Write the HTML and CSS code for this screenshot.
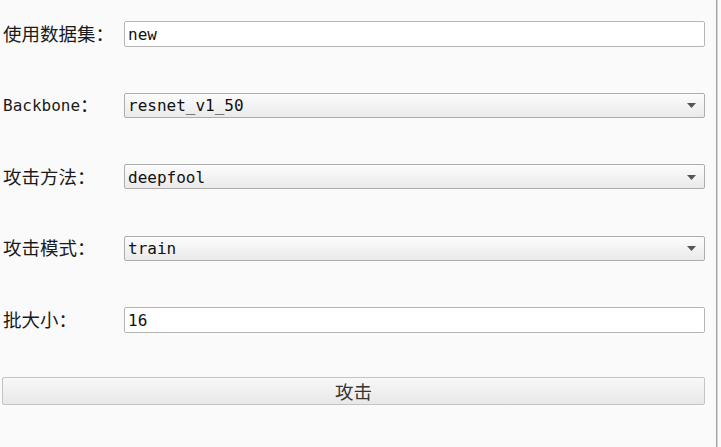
FILE: index.html
```html
<!DOCTYPE html>
<html lang="zh">
<head>
<meta charset="utf-8">
<title>攻击</title>
<link rel="stylesheet" href="styles.css">
</head>
<body>
<div class="window">
  <main class="form">
    <label class="label"><span class="cjk">使用数据集：</span></label>
    <input class="field" type="text" value="new">

    <label class="label">Backbone<span class="cjk">：</span></label>
    <div class="field combo"><span>resnet_v1_50</span><svg class="arrow" width="9" height="5" viewBox="0 0 9 5"><polygon points="0,0 9,0 4.5,5" fill="#555"/></svg></div>

    <label class="label"><span class="cjk">攻击方法：</span></label>
    <div class="field combo"><span>deepfool</span><svg class="arrow" width="9" height="5" viewBox="0 0 9 5"><polygon points="0,0 9,0 4.5,5" fill="#555"/></svg></div>

    <label class="label"><span class="cjk">攻击模式：</span></label>
    <div class="field combo"><span>train</span><svg class="arrow" width="9" height="5" viewBox="0 0 9 5"><polygon points="0,0 9,0 4.5,5" fill="#555"/></svg></div>

    <label class="label"><span class="cjk">批大小：</span></label>
    <input class="field" type="text" value="16">

    <button class="attack" type="button">攻击</button>
  </main>
  <div class="edge"></div>
</div>
</body>
</html>
```

FILE: styles.css
```css
html, body {
  margin: 0;
  padding: 0;
  background: #fafafa;
}

body {
  font-family: "DejaVu Sans Mono", "Noto Sans CJK SC", monospace;
  font-size: 16px;
  color: #111;
}

.window {
  display: flex;
  height: 447px;
}

.form {
  width: 716px;
  box-sizing: border-box;
  padding: 21px 11px 0 2px;
  display: grid;
  grid-template-columns: 122px 1fr;
  grid-auto-rows: 26px;
  row-gap: 45.4px;
  align-items: center;
  align-content: start;
}

.label {
  padding-left: 1px;
  white-space: nowrap;
  line-height: 28px;
  height: 26px;
  color: #1a1a1a;
}

.cjk {
  font-family: "Noto Sans CJK SC", sans-serif;
  font-size: 18.5px;
  line-height: 1;
  vertical-align: -1px;
  color: #1a1a1a;
}

.field {
  height: 26px;
  box-sizing: border-box;
  margin: 0;
  border: 1px solid #b6b6b6;
  border-radius: 2px;
  background: #fff;
  padding: 1px 3px 0;
  font-family: "DejaVu Sans Mono", monospace;
  font-size: 16px;
  color: #111;
  outline: none;
  width: 100%;
}

.combo {
  height: 25px;
  display: flex;
  align-items: center;
  justify-content: space-between;
  padding-right: 8px;
  background: linear-gradient(#fcfcfc, #eaeaea);
  border-color: #adadad;
}

.arrow {
  display: block;
}

.attack {
  grid-column: 1 / -1;
  height: 28px;
  box-sizing: border-box;
  margin: 0;
  border: 1px solid #c4c4c4;
  border-radius: 2px;
  background: linear-gradient(#f8f8f8, #e8e8e8);
  font-family: "Noto Sans CJK SC", sans-serif;
  font-size: 18.5px;
  line-height: 1;
  color: #333;
  padding: 0;
}

.edge {
  width: 1px;
  border-left: 1px solid #a3a3a3;
  background: #d4d4d4;
}
```
